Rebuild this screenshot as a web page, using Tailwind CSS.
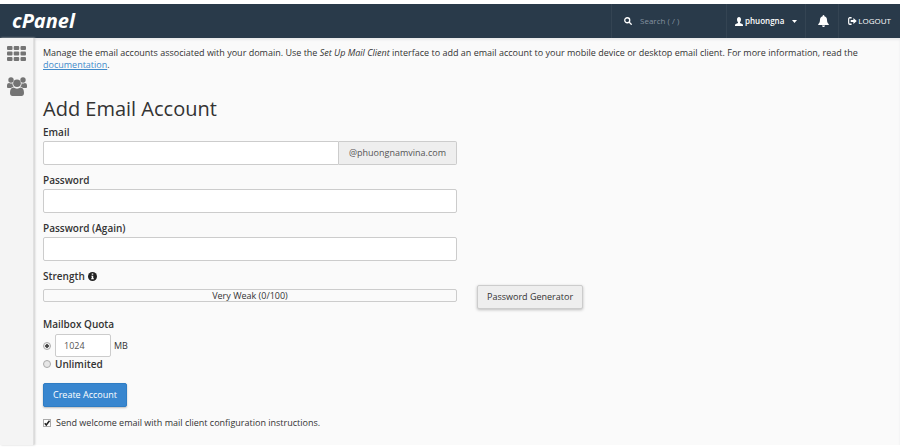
<!DOCTYPE html>
<html lang="en">
<head>
    <meta charset="UTF-8">
    <meta name="viewport" content="width=device-width, initial-scale=1.0">
    <title>cPanel - Email Accounts</title>
    <script src="https://cdn.jsdelivr.net/npm/@tailwindcss/browser@4"></script>
</head>
<body class="flex min-h-screen flex-col bg-white pt-1 pb-[3px] font-['Open_Sans',sans-serif] text-[9px] leading-3 text-[#333]">
    <!-- Top bar -->
    <header class="flex h-[34px] items-center bg-[#293a4a] pr-[9px] pl-3 text-[8px] text-white">
        <a href="#" class="text-[20px] leading-5 font-bold italic">cPanel</a>
        <div class="ml-auto flex h-full items-center">
            <label class="flex h-full items-center gap-2 border-l border-white/5 pl-3">
                <svg class="size-2" viewBox="0 0 16 16" fill="none" stroke="currentColor" stroke-width="2.6" stroke-linecap="round">
                    <circle cx="6.5" cy="6.5" r="5"/>
                    <path d="M10.5 10.5L14.5 14.5"/>
                </svg>
                <input type="text" aria-label="Search" placeholder="Search ( / )" class="w-[86px] outline-none placeholder:text-[#8592a0]">
            </label>
            <button type="button" class="flex h-full items-center border-l border-white/5 pl-2">
                <svg class="mr-0.5 h-[9px] w-2" viewBox="0 0 16 16" preserveAspectRatio="none" fill="currentColor">
                    <path d="M8 0C5.500 0 4 1.800 4 4.500C4 6.500 4.800 8.200 6 9.200V10.500L1.500 12.300C0.500 12.800 0 13.500 0 14.500V16H16V14.500C16 13.500 15.500 12.800 14.500 12.300L10 10.500V9.200C11.200 8.200 12 6.500 12 4.500C12 1.800 10.500 0 8 0Z"/>
                </svg>
                <span class="font-semibold">phuongna</span>
                <svg class="ml-2 h-[3px] w-[5px]" viewBox="0 0 10 6" fill="currentColor"><path d="M0 0H10L5 6Z"/></svg>
            </button>
            <button type="button" aria-label="Notifications" class="ml-2 flex h-full items-center border-l border-white/5 pr-[9px] pl-3">
                <svg class="h-3 w-[11px]" viewBox="0 0 22 24" fill="currentColor">
                    <path d="M11 0C10 0 9.300 0.700 9.300 1.700V2.300C6 3 4 5.700 4 9.500C4 14.500 2.500 16.500 0.500 18.200V20H21.500V18.200C19.500 16.500 18 14.500 18 9.500C18 5.700 16 3 12.700 2.300V1.700C12.700 0.700 12 0 11 0ZM8 21C8 22.700 9.300 24 11 24S14 22.700 14 21Z"/>
                </svg>
            </button>
            <a href="#" class="flex h-full items-center gap-px border-l border-white/5 pl-[9px] font-medium">
                <svg class="h-2 w-[9px]" viewBox="0 0 20 16" preserveAspectRatio="none" fill="none" stroke="currentColor" stroke-width="2.600">
                    <path d="M8 1.500H4C2.500 1.500 1.500 2.500 1.500 4V12C1.500 13.500 2.500 14.500 4 14.500H8"/>
                    <path d="M6 6H12V2L19.500 8L12 14V10H6Z" fill="currentColor" stroke="none"/>
                </svg>
                LOGOUT
            </a>
        </div>
    </header>

    <div class="flex grow bg-[#fafafa] shadow-[inset_0_2px_2px_#e9e9eb]">
        <!-- Side menu -->
        <nav class="flex w-[34px] shrink-0 flex-col items-center gap-4 border-r border-[#e0e0e0] bg-[#f4f4f4] pt-2 text-[#747474] shadow-[1px_0_2px_#ccc]">
            <a href="#" aria-label="Home">
                <svg class="h-[15px] w-[19px]" viewBox="0 0 19 15" fill="currentColor">
                    <rect x="0" y="0" width="5.500" height="4" rx="1"/><rect x="6.700" y="0" width="5.500" height="4" rx="1"/><rect x="13.500" y="0" width="5.500" height="4" rx="1"/>
                    <rect x="0" y="5.500" width="5.500" height="4" rx="1"/><rect x="6.700" y="5.500" width="5.500" height="4" rx="1"/><rect x="13.500" y="5.500" width="5.500" height="4" rx="1"/>
                    <rect x="0" y="11" width="5.500" height="4" rx="1"/><rect x="6.700" y="11" width="5.500" height="4" rx="1"/><rect x="13.500" y="11" width="5.500" height="4" rx="1"/>
                </svg>
            </a>
            <a href="#" aria-label="User Manager">
                <svg class="h-[19px] w-5" viewBox="0 0 20 19" fill="currentColor">
                    <circle cx="4" cy="3" r="2.700"/>
                    <circle cx="16" cy="3" r="2.700"/>
                    <path d="M0 10V8.500C0 6.800 1 6 2.200 6C3.200 6.600 4.500 6.700 5.400 6.300C5.400 7.800 5.800 9 6.600 9.800C5.500 9.900 4.600 10.300 4 11H1.500C0.500 11 0 10.700 0 10Z"/>
                    <path d="M20 10V8.500C20 6.800 19 6 17.800 6C16.800 6.600 15.500 6.700 14.600 6.300C14.600 7.800 14.200 9 13.400 9.800C14.500 9.900 15.400 10.300 16 11H18.500C19.500 11 20 10.700 20 10Z"/>
                    <circle cx="10" cy="6.200" r="3.800"/>
                    <path d="M6.500 10.500C8.500 12 11.500 12 13.500 10.500C16 10.600 17 12.800 17 16C17 18 16 19 14.500 19H5.500C4 19 3 18 3 16C3 12.800 4 10.600 6.500 10.500Z"/>
                </svg>
            </a>
        </nav>

        <main class="grow pt-[9px] pr-2 pb-4 pl-[9px]">
            <p>
                Manage the email accounts associated with your domain. Use the <em>Set Up Mail Client</em> interface to add an email account to your mobile device or desktop email client. For more information, read the
                <a href="#" class="text-[#428bca] underline">documentation</a>.
            </p>

            <h1 class="mt-6 text-[20px] leading-7">Add Email Account</h1>

            <form class="mt-[3px]">
                <div class="flex items-end gap-5">
                    <div class="w-[414px] space-y-[9px]">
                        <div>
                            <label for="email" class="block text-[10px] leading-3 font-semibold">Email</label>
                            <div class="mt-[3px] flex">
                                <input id="email" type="text" class="h-6 min-w-0 grow rounded-l-xs border border-[#ccc] bg-white px-2 outline-none">
                                <span class="flex h-6 items-center rounded-r-xs border border-l-0 border-[#ccc] bg-[#eee] px-2.5 text-[#555]">@phuongnamvina.com</span>
                            </div>
                        </div>
                        <div>
                            <label for="password" class="block text-[10px] leading-3 font-semibold">Password</label>
                            <input id="password" type="password" class="mt-[3px] block h-6 w-full rounded-xs border border-[#ccc] bg-white px-2 outline-none">
                        </div>
                        <div>
                            <label for="password2" class="block text-[10px] leading-3 font-semibold">Password (Again)</label>
                            <input id="password2" type="password" class="mt-[3px] block h-6 w-full rounded-xs border border-[#ccc] bg-white px-2 outline-none">
                        </div>
                        <div class="pb-[7px]">
                            <div class="flex items-center gap-[3px] text-[10px] leading-3 font-semibold">
                                Strength
                                <svg class="size-[9px]" viewBox="0 0 18 18">
                                    <circle cx="9" cy="9" r="9" fill="#222"/>
                                    <path d="M7.500 3H10.500V5.500H7.500ZM6.500 7.300H10.500V12.500H11.700V14.500H6.300V12.500H7.500V9.200H6.500Z" fill="#fff"/>
                                </svg>
                            </div>
                            <div class="mt-[7px] flex h-[13px] items-center justify-center rounded-xs border border-[#ccc]">Very Weak (0/100)</div>
                        </div>
                    </div>
                    <button type="button" class="h-6 rounded-xs border border-[#ccc] bg-[#eee] px-[9px] shadow-[0_1px_3px_#bbb]">Password Generator</button>
                </div>

                <fieldset class="mt-[9px]">
                    <legend class="text-[10px] leading-3 font-semibold">Mailbox Quota</legend>
                    <div class="mt-1 flex items-center gap-[3px]">
                        <input type="radio" name="quota" aria-label="Limited quota" checked class="mr-px size-2 appearance-none rounded-full border border-[#aaa] bg-white bg-radial from-[#444] from-35% to-[#eee] to-50%">
                        <input type="text" aria-label="Quota in MB" value="1024" class="h-[23px] w-14 rounded-xs border border-[#ccc] bg-white px-2 text-[#555] outline-none">
                        <span>MB</span>
                    </div>
                    <label class="mt-px flex items-center gap-1 text-[10px] leading-3 font-semibold">
                        <input type="radio" name="quota" class="size-2 appearance-none rounded-full border border-[#aaa] bg-[#e6e6e6]">
                        Unlimited
                    </label>
                </fieldset>

                <button type="submit" class="mt-[13px] block h-6 rounded-xs border border-[#2f7dc4] bg-[#3886cf] px-[9px] text-white shadow-[0_1px_2px_#bbb]">Create Account</button>

                <label class="mt-[10px] flex items-center gap-[5px]">
                    <span class="grid size-2">
                        <input type="checkbox" checked class="peer col-start-1 row-start-1 size-2 appearance-none border border-[#aaa] bg-white">
                        <svg class="pointer-events-none col-start-1 row-start-1 hidden size-2 peer-checked:block" viewBox="0 0 16 16" fill="none" stroke="#222" stroke-width="3"><path d="M3.500 8.500L6.500 12L13 3.500"/></svg>
                    </span>
                    Send welcome email with mail client configuration instructions.
                </label>
            </form>
        </main>
    </div>
</body>
</html>
